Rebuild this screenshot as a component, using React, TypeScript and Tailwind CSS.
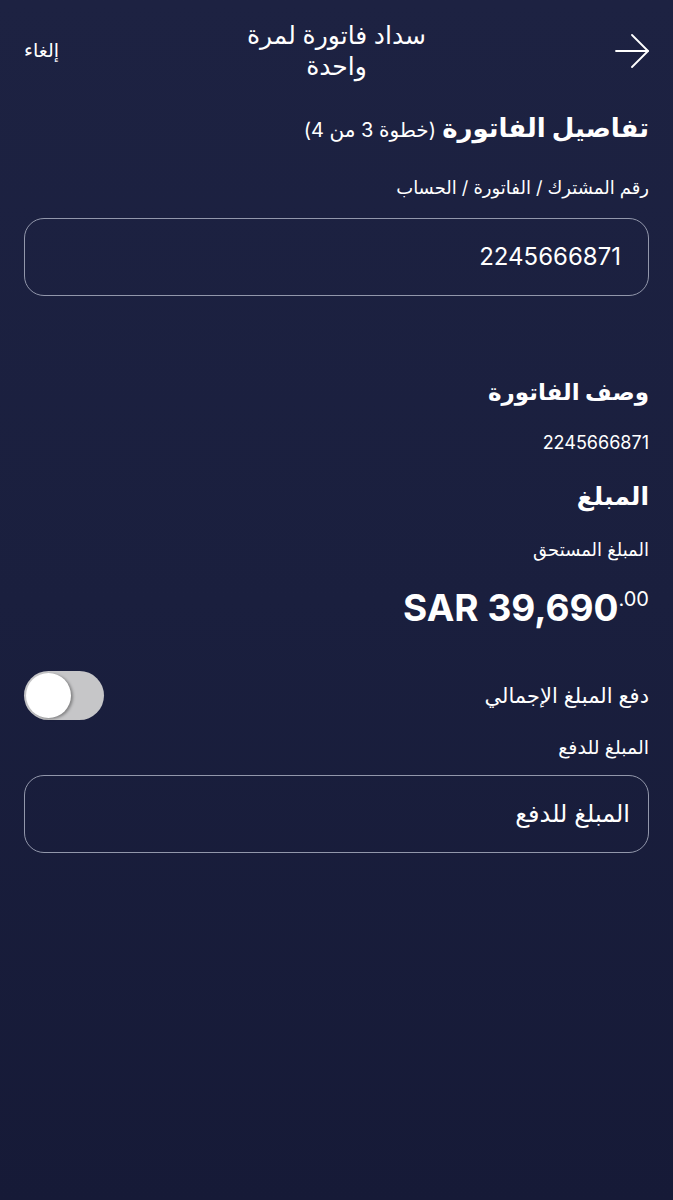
import { useState } from "react"

const FONT = { fontFamily: '"Inter", "Noto Sans", "DejaVu Sans", sans-serif' }

function ArrowIcon() {
  return (
    <svg width="34" height="34" viewBox="0 0 34 34" fill="none" stroke="white" strokeWidth="1.8" strokeLinecap="round" strokeLinejoin="round">
      <path d="M1 17h32" />
      <path d="M17 1l16 16-16 16" />
    </svg>
  )
}

export default function App() {
  const [full, setFull] = useState(false)

  return (
    <div
      dir="rtl"
      style={FONT}
      className="min-h-[1200px] w-full bg-gradient-to-b from-[#1d2242] via-[#1a1f3e] to-[#161a37] px-6 text-white"
    >
      {/* header */}
      <div className="flex items-center justify-between pt-[20px]">
        <button type="button" className="flex w-[70px] justify-start">
          <ArrowIcon />
        </button>
        <h1 className="text-center text-[25px] leading-[31px] font-medium">
          سداد فاتورة لمرة
          <br />
          واحدة
        </h1>
        <button type="button" className="w-[70px] text-left text-[19px]">
          إلغاء
        </button>
      </div>

      <h2 className="mt-[28px] text-[26px] leading-[36px] font-bold">
        تفاصيل الفاتورة{" "}
        <span className="text-[20px] font-normal">(خطوة 3 من 4)</span>
      </h2>

      <p className="mt-[28px] text-[18px] leading-[24px]">رقم المشترك / الفاتورة / الحساب</p>

      <div className="mt-[18px] flex h-[78px] items-center rounded-[20px] border-[1.5px] border-[#9297ab] px-[27px]">
        <span className="text-[24px]">2245666871</span>
      </div>

      <h3 className="mt-[79px] text-[23px] leading-[34px] font-bold">وصف الفاتورة</h3>
      <p className="mt-[22px] text-[18px] leading-[24px]">2245666871</p>

      <h3 className="mt-[24px] text-[25px] leading-[34px] font-bold">المبلغ</h3>
      <p className="mt-[25px] text-[18px] leading-[24px]">المبلغ المستحق</p>

      <div dir="ltr" className="mt-[24px] flex justify-end">
        <span className="text-[37px] leading-[44px] font-bold">SAR 39,690</span>
        <span className="mt-[3px] text-[20px] leading-[20px]">.00</span>
      </div>

      <div className="mt-[41px] flex items-center justify-between">
        <span className="text-[21px]">دفع المبلغ الإجمالي</span>
        <button
          type="button"
          dir="ltr"
          onClick={() => setFull(!full)}
          className={`flex h-[49px] w-[80px] items-center rounded-full px-[2px] ${full ? "justify-end bg-[#34c759]" : "justify-start bg-[#c6c6c8]"}`}
        >
          <span className="block h-[45px] w-[45px] rounded-full bg-white shadow-[2px_1px_3px_rgba(0,0,0,0.35)]" />
        </button>
      </div>

      <p className="mt-[16px] text-[19px] leading-[24px]">المبلغ للدفع</p>

      <div className="mt-[15px] flex h-[78px] items-center rounded-[20px] border-[1.5px] border-[#9297ab] px-[18px]">
        <input
          placeholder="المبلغ للدفع"
          className="w-full bg-transparent text-[24px] text-white outline-none placeholder:text-white"
        />
      </div>
    </div>
  )
}
